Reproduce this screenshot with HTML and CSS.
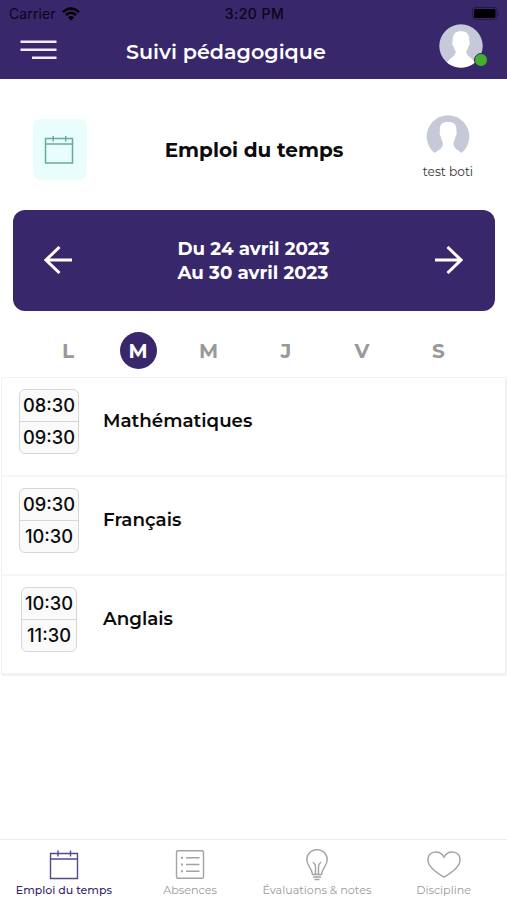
FILE: index.html
```html
<!DOCTYPE html>
<html lang="fr">
<head>
  <meta charset="UTF-8">
  <title>Suivi pédagogique</title>
  <link rel="stylesheet" href="styles.css">
</head>
<body>

  <header class="entete">
    <div class="statut">
      <div class="reseau">
        <span>Carrier</span>
        <svg width="18" height="14" viewBox="0 0 18 14">
          <path d="M1 5.2Q9-2.2 17 5.2M3.9 8Q9 3.4 14.1 8" fill="none" stroke="#000" stroke-width="2.4"/>
          <path d="M9 13.6L5.9 10.4Q9 7.8 12.1 10.4Z"/>
        </svg>
      </div>
      <span class="heure">3:20 PM</span>
      <svg class="batterie" width="28" height="13" viewBox="0 0 28 13">
        <rect x="0.5" y="0.5" width="24.5" height="12" rx="3" fill="none" stroke="#241848"/>
        <rect x="2" y="2" width="21.5" height="9" rx="1.5"/>
        <path d="M26.3 4.5q1.5 2 0 4z" fill="#241848"/>
      </svg>
    </div>
    <div class="barre">
      <svg class="menu" width="37" height="20" viewBox="0 0 37 20">
        <path d="M.5 1.7H36.5M.5 9.7H36.5M12 17.7H36.5" stroke="#f1ebff" stroke-width="2.4"/>
      </svg>
      <h1>Suivi pédagogique</h1>
      <div class="profil">
        <svg width="44" height="44" viewBox="0 0 44 44">
          <circle cx="22" cy="22" r="21.7" fill="#c6c9d7"/>
          <path d="M22 7.3C27.5 7.3 30.6 10 30.3 17C31.5 18 30.5 22 29.4 22.5C29 25 27.5 26.5 27.3 28C27.5 32 32 33 36 38.5A21.7 21.7 0 0 1 8 38.5C12 33 16.5 32 16.7 28C16.5 26.5 15 25 14.6 22.5C13.5 22 12.5 18 13.7 17C13.4 10 16.5 7.3 22 7.3Z" fill="#fff"/>
        </svg>
        <span class="en-ligne"></span>
      </div>
    </div>
  </header>

  <section class="titre">
    <div class="vignette">
      <svg width="30" height="30" viewBox="0 0 30 30">
        <path d="M1.5 3.5H28.5V28H1.5ZM1.5 9H28.5M9.2 1V6.5M21.7 1V6.5" fill="none" stroke="#63ad9d" stroke-width="1.5"/>
      </svg>
    </div>
    <h2>Emploi du temps</h2>
    <div class="eleve">
      <svg width="44" height="39" viewBox="0 0 44 39">
        <path d="M8.5 38A21.3 21.3 0 1 1 35.5 38Q33 36 29.5 33.5Q27.2 31 27.4 28Q29 25 29.5 21.5Q31.3 19 30.4 16.5C31 10 28.5 7 22 7C15.5 7 13.3 10 13.9 16.5Q13 19 14.8 21.5Q15.3 25 17 28Q17.2 31 15 33.5Q11.5 36 8.5 38Z" fill="#c6c9d7"/>
      </svg>
      <span>test boti</span>
    </div>
  </section>

  <section class="semaine">
    <svg width="28" height="28" viewBox="0 0 28 28">
      <path d="M28 14H2M15.5 1L2 14L15.5 27" fill="none" stroke="#fff" stroke-width="3"/>
    </svg>
    <p>Du 24 avril 2023<br>Au 30 avril 2023</p>
    <svg width="28" height="28" viewBox="0 0 28 28">
      <path d="M0 14H26M12.5 1L26 14L12.5 27" fill="none" stroke="#fff" stroke-width="3"/>
    </svg>
  </section>

  <div class="jours">
    <span>L</span>
    <span class="actif">M</span>
    <span>M</span>
    <span>J</span>
    <span>V</span>
    <span>S</span>
  </div>

  <main class="cours">
    <div class="ligne">
      <div class="creneau"><div class="heures"><span>08:30</span><span>09:30</span></div></div>
      <span class="matiere">Mathématiques</span>
    </div>
    <div class="ligne">
      <div class="creneau"><div class="heures"><span>09:30</span><span>10:30</span></div></div>
      <span class="matiere">Français</span>
    </div>
    <div class="ligne">
      <div class="creneau"><div class="heures etroit"><span>10:30</span><span>11:30</span></div></div>
      <span class="matiere">Anglais</span>
    </div>
  </main>

  <nav class="onglets">
    <a class="onglet choisi">
      <svg width="34" height="32" viewBox="0 0 34 32">
        <path d="M3.5 4.5H30.5V29.5H3.5ZM3.5 10H30.5M11 1.5V7.5M23.5 1.5V7.5"/>
      </svg>
      <span>Emploi du temps</span>
    </a>
    <a class="onglet">
      <svg width="34" height="32" viewBox="0 0 34 32">
        <rect x="3.5" y="1.8" width="27" height="27.5" rx="1.5"/>
        <path d="M13 8.7H26.5M13 15.5H26.5M13 22.3H26.5"/>
        <path d="M8 8.7H10M8 15.5H10M8 22.3H10" stroke-width="2"/>
      </svg>
      <span>Absences</span>
    </a>
    <a class="onglet">
      <svg width="34" height="32" viewBox="0 0 34 32">
        <path d="M12.5 25.5C12.5 19.5 6.8 17 6.8 10.8A10.2 10.2 0 0 1 27.2 10.8C27.2 17 21.5 19.5 21.5 25.5Z"/>
        <path d="M15.5 25V18Q15.3 14.5 12.8 13M18.5 25V18Q18.7 14.5 21.2 13M13 28H21M14.5 30.5H19.5"/>
      </svg>
      <span>Évaluations &amp; notes</span>
    </a>
    <a class="onglet">
      <svg width="34" height="32" viewBox="0 0 34 32">
        <path d="M17 28.2C9 23.5 1 18 1 11C1 1.5 13 .5 17 8.2C21 .5 33 1.5 33 11C33 18 25 23.5 17 28.2Z"/>
      </svg>
      <span>Discipline</span>
    </a>
  </nav>

</body>
</html>
```
FILE: styles.css
```css
* {
  box-sizing: border-box;
}

body {
  margin: 0;
  height: 900px;
  display: flex;
  flex-direction: column;
  background: #fff;
  color: #0b0b0b;
  font-family: Montserrat, Inter, sans-serif;
  overflow: hidden;
}

h1, h2, p {
  margin: 0;
}

svg {
  display: block;
}

.entete {
  height: 79px;
  background: #38276b;
}

.statut {
  height: 27px;
  padding: 0 7px 0 9px;
  display: grid;
  grid-template-columns: 1fr auto 1fr;
  align-items: center;
  font-family: Inter, sans-serif;
  font-size: 14px;
  color: #0a0614;
}

.reseau {
  display: flex;
  align-items: center;
  gap: 6px;
  letter-spacing: 0.1px;
}

.heure {
  font-weight: 500;
  letter-spacing: 0.5px;
}

.batterie {
  justify-self: end;
}

.barre {
  height: 52px;
  padding: 0 20px;
  display: flex;
  align-items: flex-start;
}

.menu {
  margin-top: 13px;
}

h1 {
  margin: 11px auto 0 69px;
  color: #fff;
  font-size: 20.7px;
  font-weight: 600;
  line-height: 27px;
}

.profil {
  position: relative;
  margin: -3px 4px 0 0;
}

.en-ligne {
  position: absolute;
  right: -5px;
  bottom: 1px;
  width: 14px;
  height: 14px;
  border: 1px solid #38276b;
  border-radius: 50%;
  background: #43b02f;
}

.titre {
  height: 131px;
  padding: 36px 32px 0 33px;
  display: grid;
  grid-template-columns: 54px 1fr 54px;
  align-items: start;
}

.vignette {
  width: 54px;
  height: 61px;
  margin-top: 4px;
  border-radius: 8px;
  background: #e9fefa;
  display: flex;
  align-items: center;
  justify-content: center;
}

.vignette svg {
  margin-right: 3px;
}

h2 {
  margin-top: 21px;
  text-align: center;
  font-size: 20px;
  line-height: 28px;
  font-weight: 700;
}

.eleve {
  display: flex;
  flex-direction: column;
  align-items: center;
  font-size: 12.2px;
  white-space: nowrap;
}

.eleve span {
  margin-top: 10px;
  line-height: 16px;
  color: #333;
}

.semaine {
  height: 101px;
  margin: 0 12px 0 13px;
  padding: 0 32px 1px 31px;
  display: flex;
  align-items: center;
  justify-content: space-between;
  border-radius: 12px;
  background: #38276b;
  color: #fff;
  font-size: 18.3px;
  font-weight: 700;
  line-height: 24px;
}

.semaine p {
  padding-top: 2px;
}

.jours {
  height: 66px;
  padding: 21px 0 0 33px;
  display: grid;
  grid-template-columns: 70px 70px 71px 84px 68px 85px;
  justify-items: center;
  color: #999;
  font-size: 20px;
  font-weight: 700;
}

.jours span {
  width: 37px;
  line-height: 38px;
  text-align: center;
}

.jours .actif {
  height: 37px;
  border-radius: 50%;
  background: #38276b;
  color: #fff;
}

.cours {
  margin: 0 0 0 1px;
  border: 1px solid #f1f1f1;
  border-width: 1px 2px 3px 1px;
  border-radius: 2px;
}

.ligne {
  height: 99px;
  padding: 11px 0 0 17px;
  display: flex;
  border-bottom: 2px solid #f6f6f6;
}

.ligne:last-child {
  border-bottom: none;
  height: 97px;
}

.creneau {
  width: 84px;
}

.heures {
  width: 60px;
  height: 65px;
  display: flex;
  flex-direction: column;
  border: 1.5px solid #d7d7d7;
  border-radius: 6px;
  background: #fafafa;
  font-family: Inter, sans-serif;
  font-size: 18.3px;
  font-weight: 500;
  text-align: center;
}

.heures.etroit {
  width: 56px;
  margin-left: 2px;
}

.heures span {
  height: 31px;
  line-height: 31px;
}

.heures span + span {
  height: 32px;
  border-top: 1px solid #d7d7d7;
}

.matiere {
  line-height: 64px;
  font-size: 18.3px;
  font-weight: 600;
}

.onglets {
  height: 61px;
  margin-top: auto;
  display: grid;
  grid-template-columns: repeat(4, 1fr);
  border-top: 1px solid #eee;
}

.onglet {
  padding-top: 9px;
  display: flex;
  flex-direction: column;
  align-items: center;
  color: #9a9a9a;
  font-size: 11.2px;
  line-height: 16px;
  white-space: nowrap;
}

.onglet svg {
  margin-bottom: 1px;
  fill: none;
  stroke: #a3a3a3;
  stroke-width: 1.4;
}

.choisi {
  padding-left: 1px;
  color: #38276b;
  font-size: 11px;
  font-weight: 500;
}

.choisi svg {
  stroke: #56488b;
}
```
